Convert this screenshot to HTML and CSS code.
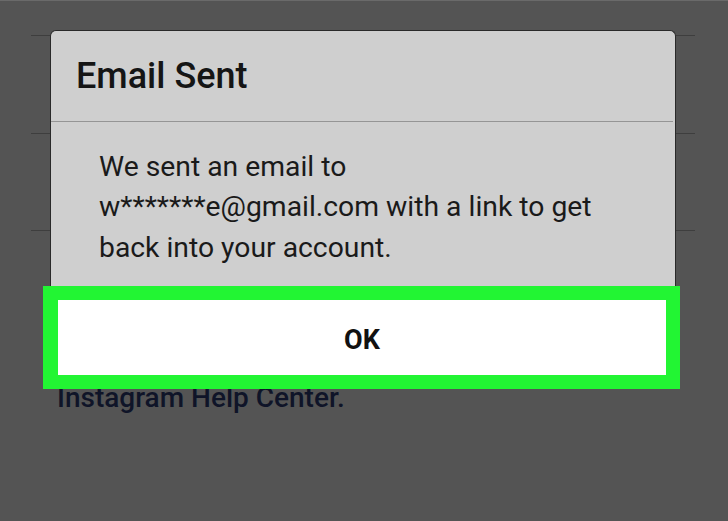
FILE: index.html
```html
<!DOCTYPE html>
<html lang="en">
<head>
<meta charset="utf-8">
<title>Email Sent</title>
<link rel="stylesheet" href="styles.css">
</head>
<body>
<div class="screen">
  <div class="dialog">
    <div class="dialog-title">Email Sent</div>
    <div class="dialog-body">We sent an email to<br>w*******e@gmail.com with a link to get<br>back into your account.</div>
    <div class="ok-highlight">
      <div class="ok-button">OK</div>
    </div>
  </div>
  <div class="help-text">Instagram Help Center.</div>
</div>
</body>
</html>
```
FILE: styles.css
```css
html, body {
  margin: 0;
  padding: 0;
  background: #545454;
}

.screen {
  height: 520px;
  overflow: hidden;
  border-top: 1px solid #6a6a6a;
  font-family: Roboto, "Liberation Sans", Arial, sans-serif;
  background-color: #545454;
  background-image:
    linear-gradient(#3e3e3e, #3e3e3e),
    linear-gradient(#3e3e3e, #3e3e3e),
    linear-gradient(#3e3e3e, #3e3e3e);
  background-repeat: no-repeat;
  background-size: 664px 1px;
  background-position: 31px 34px, 31px 132px, 31px 229px;
  display: flex;
  flex-direction: column;
}

.dialog {
  box-sizing: border-box;
  margin: 29px 0 0 50px;
  width: 626px;
  background: #cfcfcf;
  border: 1px solid #2a2a2a;
  border-bottom: none;
  border-radius: 6px 6px 0 0;
  display: flex;
  flex-direction: column;
}

.dialog-title {
  box-sizing: border-box;
  height: 91px;
  padding: 27px 0 0 25px;
  font-size: 36px;
  line-height: 36px;
  font-weight: 500;
  color: #151515;
  border-bottom: 1px solid #959595;
  margin-right: 2px;
}

.dialog-body {
  padding: 25px 0 18px 48px;
  font-size: 28.3px;
  line-height: 40.3px;
  color: #1a1a1a;
}

.ok-highlight {
  position: relative;
  z-index: 1;
  margin: 0 -5px 0 -8px;
  border: 14px solid #22f533;
  border-left-width: 15px;
  background: #ffffff;
}

.ok-button {
  box-sizing: border-box;
  height: 75px;
  padding-top: 7px;
  display: flex;
  align-items: center;
  justify-content: center;
  font-size: 27px;
  line-height: 27px;
  font-weight: 700;
  color: #111111;
}

.help-text {
  margin-top: -5px;
  padding-left: 57px;
  font-size: 28px;
  line-height: 28px;
  font-weight: 500;
  color: #0f1428;
}
```
